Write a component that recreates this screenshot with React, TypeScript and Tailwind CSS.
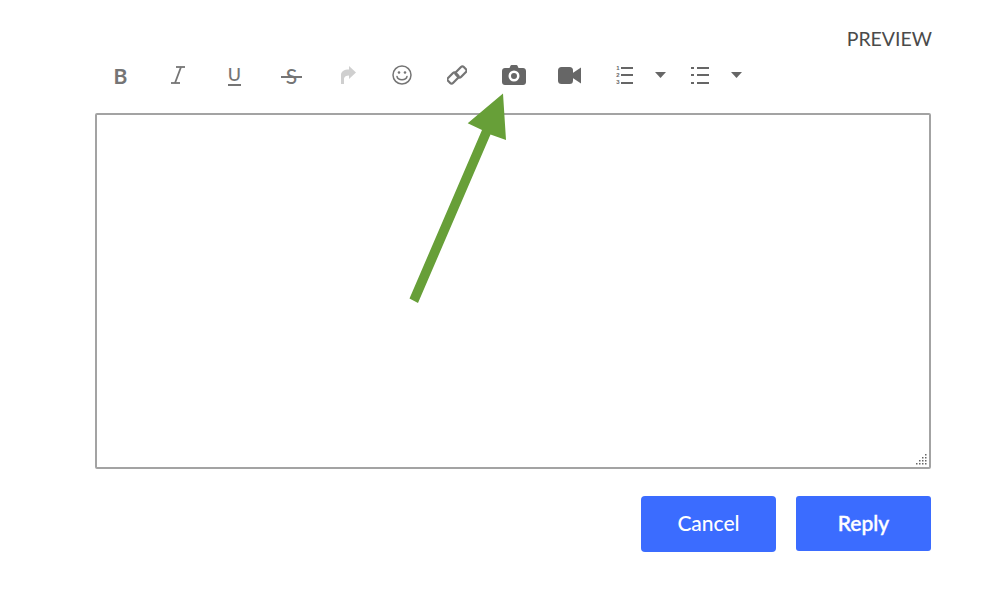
import React from 'react';
import { Italic } from 'lucide-react';

const Cell = ({ w = 'w-[57px]', children }: { w?: string; children: React.ReactNode }) => (
  <div className={`${w} h-6 flex items-center justify-center text-[#757575]`}>{children}</div>
);

const Caret = () => (
  <svg width="11" height="6" viewBox="0 0 11 6"><path d="M0 0h11L5.500 6z" fill="#666" /></svg>
);

const Redo = () => (
  <svg width="15" height="18" viewBox="0 0 15 18" fill="#cfcfcf">
    <path d="M8 0l7 6.500L8 13V9.500C5 9.500 3.500 10.500 3 12.500V18H0V9C0 5.500 3 3.500 8 3.500z" />
  </svg>
);

const Smile = () => (
  <svg width="20" height="20" viewBox="0 0 20 20" fill="none" stroke="#757575" strokeWidth="1.500">
    <circle cx="10" cy="10" r="9" />
    <circle cx="7" cy="7.500" r="1.300" fill="#757575" stroke="none" />
    <circle cx="13" cy="7.500" r="1.300" fill="#757575" stroke="none" />
    <path d="M5 11.500c1 4.200 9 4.200 10 0" strokeLinecap="round" />
  </svg>
);

const Chain = () => (
  <svg width="20" height="20" viewBox="0 0 20 20" fill="none" stroke="#757575" strokeWidth="2.200">
    <rect x="0.500" y="9.500" width="11" height="7" rx="2" transform="rotate(-45 6 13)" />
    <rect x="8.500" y="3.500" width="11" height="7" rx="2" transform="rotate(-45 14 7)" />
  </svg>
);

const Camera = () => (
  <svg width="24" height="20" viewBox="0 0 24 20">
    <path
      fillRule="evenodd"
      fill="#666"
      d="M7.500 3l1-2.200C8.700.300 9 0 9.600 0h4.800c.6 0 .9.300 1.100.8l1 2.200H21c1.700 0 3 1.300 3 3v11c0 1.700-1.300 3-3 3H3c-1.700 0-3-1.300-3-3V6c0-1.700 1.300-3 3-3zM12 5.500a5.500 5.500 0 100 11 5.500 5.500 0 000-11zM12 8a3 3 0 110 6 3 3 0 010-6z"
    />
  </svg>
);

const Video = () => (
  <svg width="23" height="17" viewBox="0 0 23 17" fill="#666">
    <rect x="0" y="0" width="15" height="17" rx="3.500" />
    <path d="M14 6.500L23 0.500v16l-9-6z" />
  </svg>
);

const Ordered = () => (
  <div className="flex items-center gap-[1px]">
    <div className="flex flex-col text-[6px] leading-[7px] font-bold font-['Liberation_Sans',sans-serif] text-[#666]">
      <span>1</span>
      <span>2</span>
      <span>3</span>
    </div>
    <div className="flex flex-col gap-[5.500px]">
      <div className="w-[12px] h-[2px] bg-[#666]" />
      <div className="w-[12px] h-[2px] bg-[#666]" />
      <div className="w-[12px] h-[2px] bg-[#666]" />
    </div>
  </div>
);

const Bullets = () => (
  <div className="flex flex-col gap-[5.500px]">
    {[0, 1, 2].map((i) => (
      <div key={i} className="flex items-center gap-[3px]">
        <div className="w-[3px] h-[2px] bg-[#666]" />
        <div className="w-[12px] h-[2px] bg-[#666]" />
      </div>
    ))}
  </div>
);

export default function App() {
  return (
    <div className="relative w-[999px] h-[596px] bg-white overflow-hidden font-['Lato',sans-serif]">
      <div className="flex justify-end pr-[67px] pt-[27px] h-[56px]">
        <span className="text-[19.500px] leading-6 text-[#4a4a4a]">PREVIEW</span>
      </div>

      <div className="flex items-center pl-[92px] h-[38px]">
        <Cell><span className="text-[21px] font-bold leading-none">B</span></Cell>
        <Cell><Italic size={24} strokeWidth={1.800} strokeLinecap="butt" /></Cell>
        <Cell><span className="text-[18px] font-medium leading-[19px] border-b-2 border-[#757575]">U</span></Cell>
        <Cell>
          <span className="relative text-[21px] font-medium leading-none">
            S
            <span className="absolute left-[-5px] right-[-5px] top-[11px] h-[2px] bg-[#757575]" />
          </span>
        </Cell>
        <Cell><Redo /></Cell>
        <Cell w="w-[50px]"><Smile /></Cell>
        <Cell w="w-[60px]"><Chain /></Cell>
        <Cell w="w-[53px]"><Camera /></Cell>
        <Cell w="w-[59px]"><Video /></Cell>
        <Cell w="w-[51px]"><Ordered /></Cell>
        <Cell w="w-[20px]"><Caret /></Cell>
        <Cell w="w-[59px]"><Bullets /></Cell>
        <Cell w="w-[14px]"><Caret /></Cell>
      </div>

      <div className="relative ml-[95px] mt-[19px] w-[836px] h-[356px] border-2 border-[#a3a3a3] rounded-[2px] bg-white">
        <svg className="absolute right-0 bottom-0" width="14" height="14" viewBox="0 0 14 14" fill="#666">
          {[
            [10, 1], [10, 4], [7, 4], [10, 7], [7, 7], [4, 7], [10, 10], [7, 10], [4, 10], [1, 10],
          ].map(([x, y]) => (
            <rect key={`${x}-${y}`} x={x} y={y} width="1.500" height="1.500" />
          ))}
        </svg>
      </div>

      <div className="flex justify-end items-start gap-[20px] pr-[68px] mt-[27px]">
        <button className="w-[135px] h-[56px] pb-[2px] rounded-[4px] bg-[#3b6cff] text-white text-[21px] font-medium">Cancel</button>
        <button className="w-[135px] h-[55px] pb-[2px] rounded-[3px] bg-[#3b6cff] text-white text-[21px] font-medium [-webkit-text-stroke:0.4px_white]">Reply</button>
      </div>

      {/* annotation arrow over the toolbar */}
      <svg className="absolute left-0 top-0" width="999" height="596" viewBox="0 0 999 596">
        <path
          fill="#679f38"
          d="M503 93.500L506 140 490.500 134.500 418 303 409.500 298.500 482 130 467.700 123.300z"
        />
      </svg>
    </div>
  );
}
